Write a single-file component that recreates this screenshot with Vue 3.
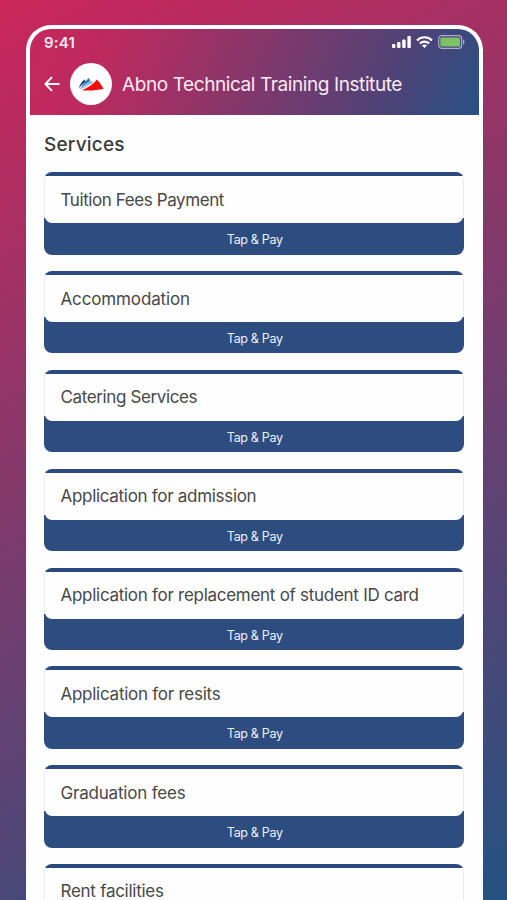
<script setup>
const services = [
  { name: 'Tuition Fees Payment', tracking: -0.41 },
  { name: 'Accommodation', tracking: -0.13 },
  { name: 'Catering Services', tracking: -0.38 },
  { name: 'Application for admission', tracking: -0.3 },
  { name: 'Application for replacement of student ID card', tracking: -0.28 },
  { name: 'Application for resits', tracking: -0.26 },
  { name: 'Graduation fees', tracking: -0.2 },
  { name: 'Rent facilities', tracking: -0.27 }
]
</script>

<template>
  <div class="stage">
    <main class="phone">
      <header class="header">
        <div class="status">
          <span class="time">9:41</span>
          <div class="indicators">
            <svg class="signal" viewBox="0 0 19 12" fill="#fff">
              <rect x="0" y="8" width="3.4" height="4" rx="1" />
              <rect x="5.1" y="6" width="3.4" height="6" rx="1" />
              <rect x="10.2" y="3.4" width="3.4" height="8.6" rx="1" />
              <rect x="15.4" y="0" width="3.4" height="12" rx="1" />
            </svg>
            <svg class="wifi" viewBox="0 0 17 12" fill="none" stroke="#fff" stroke-width="2.2">
              <path d="M1 4.4C5.1.2 11.9.2 16 4.4" />
              <path d="M3.9 7.4c2.6-2.5 6.6-2.5 9.2 0" />
              <path d="M8.5 12 6 9.5c1.4-1.3 3.6-1.3 5 0Z" fill="#fff" stroke="none" />
            </svg>
            <svg class="battery" viewBox="0 0 27 14">
              <rect x=".7" y=".7" width="23" height="12.6" rx="3" fill="none" stroke="#b5a9cc" stroke-width="1.2" />
              <rect x="2.4" y="2.4" width="19.6" height="9.2" rx="1.4" fill="#7dc365" />
              <path d="M25 4.6c2 .8 2 4 0 4.8Z" fill="#b5a9cc" />
            </svg>
          </div>
        </div>
        <div class="titlebar">
          <svg class="back" viewBox="0 0 16 16" fill="none" stroke="#fff" stroke-width="1.9">
            <path d="M15.5 8H1.6M8 1.2 1.4 8 8 14.8" />
          </svg>
          <div class="logo">
            <svg viewBox="0 0 26 14">
              <path d="M.5 11.5C1.8 7.6 4 4 6.6 2.4L7.6 4.8C4.6 7 2.6 9.3.5 11.5Z" fill="#153f70" />
              <path d="M1.4 12.2C5 7.6 7.8 3.6 11 .8l1.2 3.4C8.4 6.2 5 9 1.4 12.2Z" fill="#367bb5" />
              <path d="M1.6 12.9C5.2 8.8 9.8 5.6 14 3.4l.6 2.6C10 8.4 6 10.6 1.6 12.9Z" fill="#8bb7df" />
              <path d="M4 13.3C9.5 10.8 14.9 7.9 18.8 2.6c1.1 1.6 2.5 2.2 3.4 3.9.5 1.3 2.2 2.5 3.3 5.6C18.4 13.4 11 14 4 13.3Z" fill="#f20d0b" />
            </svg>
          </div>
          <h1 class="title">Abno Technical Training Institute</h1>
        </div>
      </header>
      <section class="content">
        <h2 class="heading">Services</h2>
        <div class="list">
          <article v-for="s in services" :key="s.name" class="card">
            <div class="card-body"><span :style="{ letterSpacing: s.tracking + 'px' }">{{ s.name }}</span></div>
            <button class="pay">Tap &amp; Pay</button>
          </article>
        </div>
      </section>
    </main>
  </div>
</template>

<style>
body { overflow: hidden; }
</style>

<style scoped>
.stage {
  box-sizing: border-box;
  width: 507px;
  height: 900px;
  overflow: hidden;
  padding: 24.5px 24.5px 0 25.5px;
  background: linear-gradient(152deg, #cb265b 0%, #235281 100%);
  font-family: Inter, "Liberation Sans", sans-serif;
}
.phone {
  box-sizing: border-box;
  height: 960px;
  padding: 4px 4px 0;
  background: #fefefe;
  border-radius: 25px 25px 0 0;
}
.header {
  box-sizing: border-box;
  height: 86.5px;
  padding: 5.5px 14px 0 14.5px;
  border-radius: 21px 21px 0 0;
  background: linear-gradient(115deg, #c5285c 0%, #bd2a5e 18%, #494478 82%, #285183 100%);
}
.status {
  display: flex;
  align-items: center;
  justify-content: space-between;
  height: 16px;
}
.time {
  color: #fbe9f1;
  font-size: 15px;
  font-weight: 600;
  letter-spacing: .2px;
}
.indicators { display: flex; align-items: center; }
.signal { width: 19px; height: 12px; margin-right: 5px; }
.wifi { width: 17px; height: 12px; margin-right: 5px; }
.battery { width: 27px; height: 14px; }
.titlebar {
  display: flex;
  align-items: center;
  height: 42px;
  margin-top: 13px;
}
.back { width: 16px; height: 16px; margin-right: 10px; }
.logo {
  display: flex;
  align-items: center;
  justify-content: center;
  width: 42px;
  height: 42px;
  margin-right: 10px;
  border-radius: 50%;
  background: #fff;
}
.logo svg { width: 26px; height: 14px; }
.title {
  margin: 0;
  padding-top: 2px;
  color: #fbe9f4;
  font-size: 19px;
  font-weight: 400;
  line-height: 24px;
  letter-spacing: -.41px;
  white-space: nowrap;
}
.content { padding: 18px 15px 0 14.5px; }
.heading {
  margin: 0 0 15.2px;
  color: #3b3b3b;
  font-size: 19px;
  font-weight: 500;
  line-height: 24px;
  letter-spacing: .2px;
}
.list { display: flex; flex-direction: column; gap: 16.4px; }
.card {
  box-sizing: border-box;
  height: 82.45px;
  padding: 4px 0 0;
  border-radius: 8px;
  background: linear-gradient(#2c4a80 0 4px, #e9ebed 4px 46px, #2d4c80 46px);
}
.card-body {
  display: flex;
  align-items: center;
  box-sizing: border-box;
  height: 47px;
  margin: 0 1px;
  padding: 0 15px 0 15.5px;
  border-radius: 2px 2px 7px 7px;
  background: #fefefe;
  color: #484848;
  font-size: 17px;
  white-space: nowrap;
}
.pay {
  display: block;
  width: 100%;
  height: 31px;
  padding: 2px 0 0 2px;
  border: 0;
  background: none;
  color: #edf2fa;
  font: 400 12.5px Inter, "Liberation Sans", sans-serif;
  letter-spacing: -.33px;
}
</style>
